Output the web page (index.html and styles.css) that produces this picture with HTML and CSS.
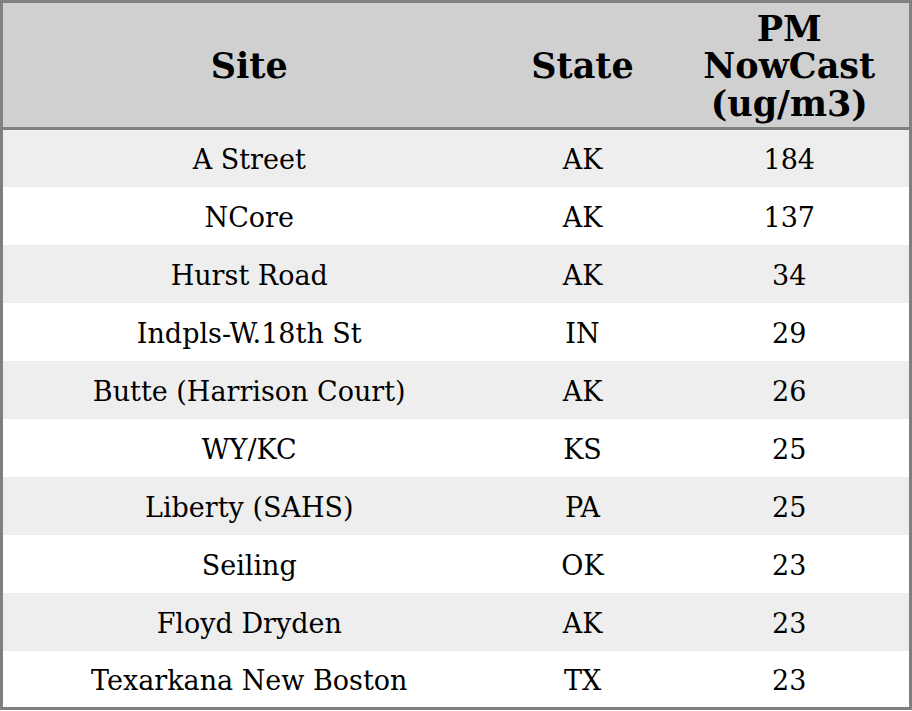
FILE: index.html
```html
<!DOCTYPE html>
<html>
<head>
<meta charset="utf-8">
<link rel="stylesheet" href="styles.css">
</head>
<body>
<table class="aq-table">
  <thead>
    <tr>
      <th class="col-site">Site</th>
      <th class="col-state">State</th>
      <th class="col-pm">PM<br>NowCast<br>(ug/m3)</th>
    </tr>
  </thead>
  <tbody>
    <tr><td>A Street</td><td>AK</td><td>184</td></tr>
    <tr><td>NCore</td><td>AK</td><td>137</td></tr>
    <tr><td>Hurst Road</td><td>AK</td><td>34</td></tr>
    <tr><td>Indpls-W.18th St</td><td>IN</td><td>29</td></tr>
    <tr><td>Butte (Harrison Court)</td><td>AK</td><td>26</td></tr>
    <tr><td>WY/KC</td><td>KS</td><td>25</td></tr>
    <tr><td>Liberty (SAHS)</td><td>PA</td><td>25</td></tr>
    <tr><td>Seiling</td><td>OK</td><td>23</td></tr>
    <tr><td>Floyd Dryden</td><td>AK</td><td>23</td></tr>
    <tr><td>Texarkana New Boston</td><td>TX</td><td>23</td></tr>
  </tbody>
</table>
</body>
</html>
```
FILE: styles.css
```css
html, body {
  margin: 0;
  padding: 0;
  background: #ffffff;
}
.aq-table {
  width: 912px;
  border-collapse: collapse;
  border: 3px solid #808080;
  font-family: "DejaVu Serif", serif;
  color: #000;
  table-layout: fixed;
}
.aq-table th {
  background: #d0d0d0;
  font-size: 35px;
  font-weight: bold;
  line-height: 37.5px;
  height: 127px;
  padding: 2px 0 0 0;
  text-align: center;
  vertical-align: middle;
  border-bottom: 3px solid #808080;
  box-sizing: border-box;
}
.col-site { width: 494px; }
.col-state { width: 174px; }
.aq-table td {
  font-size: 27px;
  line-height: 30px;
  height: 58px;
  padding: 4px 0 0 0;
  text-align: center;
  vertical-align: middle;
  box-sizing: border-box;
}
.aq-table tbody tr:nth-child(odd) td { background: #eeeeee; }
.aq-table tbody tr:nth-child(even) td { background: #ffffff; }
```
